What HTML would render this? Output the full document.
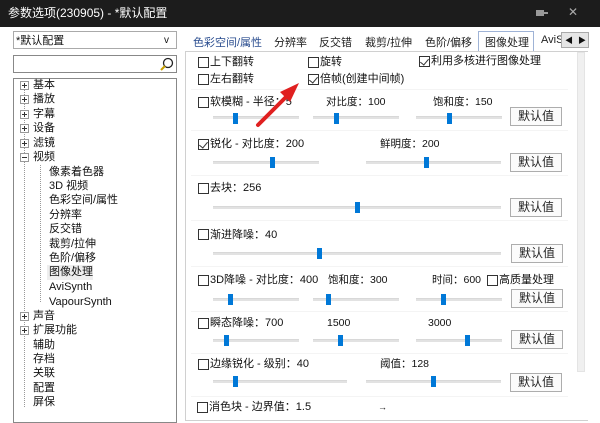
<!DOCTYPE html>
<html><head><meta charset="utf-8"><style>
*{margin:0;padding:0;box-sizing:border-box}
body{width:600px;height:416px;overflow:hidden;background:#fff;position:relative;font-family:"Liberation Sans","Noto Sans CJK SC",sans-serif;font-size:11px;color:#000}
.a{position:absolute;white-space:nowrap;line-height:13px;font-size:10.5px;color:#111}
.cb{position:absolute;width:11px;height:11px;border:1px solid #333;background:#fff}
.ck::after{content:"";position:absolute;left:2px;top:0px;width:4px;height:7px;border:solid #333;border-width:0 1px 1px 0;transform:rotate(40deg)}
.tr{position:absolute;height:3px;background:#e2e2e2;border-top:1px solid #d8d8d8}
.th{position:absolute;width:5px;height:11px;background:#0078d7}
.btn{position:absolute;width:52px;height:19px;border:1px solid #adadad;background:#fbfbfb;font-size:12px;text-align:center;line-height:17px;color:#222}
.sep{position:absolute;left:191px;width:377px;height:1px;background:#bdbdbd;border-bottom:1px solid #f4f4f4}
.pl{position:absolute;left:20px;width:9px;height:9px;border:1px solid #999;background:#fff}
.pl::before{content:"";position:absolute;left:1px;top:3px;width:5px;height:1px;background:#333}
.pl.p::after{content:"";position:absolute;left:3px;top:1px;width:1px;height:5px;background:#333}
.t{position:absolute;font-size:11px;line-height:14px;white-space:nowrap;color:#111}
.tab{position:absolute;top:34px;font-size:11px;color:#222}
</style></head><body>
<div style="position:absolute;left:0;top:0;width:600px;height:27px;background:#1c1c1c"></div>
<div class="a" style="left:8px;top:6px;color:#fff;font-size:12px;line-height:15px">参数选项(230905) - *默认配置</div>
<div class="a" style="left:568px;top:6px;color:#aaa;font-size:12px">✕</div>
<div style="position:absolute;left:536px;top:10px;width:8px;height:6px;background:#999"></div>
<div style="position:absolute;left:544px;top:12px;width:4px;height:2px;background:#999"></div>

<div style="position:absolute;left:13px;top:31px;width:164px;height:18px;border:1px solid #aaa;background:#fff"></div>
<div class="t" style="left:16px;top:34px">*默认配置</div>
<div class="a" style="left:164px;top:34px;font-size:10px">v</div>
<div style="position:absolute;left:13px;top:55px;width:164px;height:18px;border:1px solid #888"></div>
<svg style="position:absolute;left:159px;top:56px" width="16" height="16"><circle cx="9" cy="7" r="4.5" fill="none" stroke="#222" stroke-width="1.3"/><line x1="6" y1="10" x2="2" y2="14" stroke="#c8a000" stroke-width="2"/></svg>
<div style="position:absolute;left:13px;top:78px;width:164px;height:345px;border:1px solid #888"></div>
<div style="position:absolute;left:24px;top:90px;height:317px;border-left:1px dotted #999"></div>
<div style="position:absolute;left:40px;top:165px;height:137px;border-left:1px dotted #999"></div>

<div class="pl p" style="top:81px"></div><div class="t" style="left:33px;top:78px">基本</div>
<div class="pl p" style="top:95px"></div><div class="t" style="left:33px;top:92px">播放</div>
<div class="pl p" style="top:110px"></div><div class="t" style="left:33px;top:107px">字幕</div>
<div class="pl p" style="top:124px"></div><div class="t" style="left:33px;top:121px">设备</div>
<div class="pl p" style="top:139px"></div><div class="t" style="left:33px;top:136px">滤镜</div>
<div class="pl" style="top:153px"></div><div class="t" style="left:33px;top:150px">视频</div>
<div class="t" style="left:49px;top:165px">像素着色器</div>
<div class="t" style="left:49px;top:179px">3D 视频</div>
<div class="t" style="left:49px;top:193px">色彩空间/属性</div>
<div class="t" style="left:49px;top:208px">分辨率</div>
<div class="t" style="left:49px;top:222px">反交错</div>
<div class="t" style="left:49px;top:237px">裁剪/拉伸</div>
<div class="t" style="left:49px;top:251px">色阶/偏移</div>
<div style="position:absolute;left:47px;top:265px;width:46px;height:15px;background:#eee"></div>
<div class="t" style="left:49px;top:265px">图像处理</div>
<div class="t" style="left:49px;top:280px">AviSynth</div>
<div class="t" style="left:49px;top:295px">VapourSynth</div>
<div class="pl p" style="top:312px"></div><div class="t" style="left:33px;top:309px">声音</div>
<div class="pl p" style="top:326px"></div><div class="t" style="left:33px;top:323px">扩展功能</div>
<div class="t" style="left:33px;top:338px">辅助</div>
<div class="t" style="left:33px;top:352px">存档</div>
<div class="t" style="left:33px;top:366px">关联</div>
<div class="t" style="left:33px;top:381px">配置</div>
<div class="t" style="left:33px;top:395px">屏保</div>

<div class="tab" style="left:193px;color:#2a4d8f">色彩空间/属性</div>
<div class="tab" style="left:274px">分辨率</div>
<div class="tab" style="left:319px">反交错</div>
<div class="tab" style="left:365px">裁剪/拉伸</div>
<div class="tab" style="left:425px">色阶/偏移</div>
<div style="position:absolute;left:478px;top:31px;width:56px;height:21px;border:1px solid #9fb3d6;border-bottom:none;background:#fff"></div>
<div class="tab" style="left:485px">图像处理</div>
<div class="tab" style="left:541px">AviS</div>
<div style="position:absolute;left:561px;top:32px;width:28px;height:16px;border:1px solid #aaa;background:#e6e6e6"></div>
<div class="a" style="left:565px;top:34px;font-size:8px">◀</div><div class="a" style="left:578px;top:34px;font-size:8px">▶</div>
<div style="position:absolute;left:185px;top:51px;width:403px;height:370px;border:1px solid #d0d0d0;border-right:none"></div>
<div style="position:absolute;left:577px;top:52px;width:8px;height:320px;background:#f0f0f0;border:1px solid #e4e4e4"></div>

<div class="cb" style="left:198px;top:57px"></div><div class="t" style="left:210px;top:55px">上下翻转</div>
<div class="cb" style="left:198px;top:74px"></div><div class="t" style="left:210px;top:72px">左右翻转</div>
<div class="cb" style="left:308px;top:57px"></div><div class="t" style="left:320px;top:55px">旋转</div>
<div class="cb ck" style="left:308px;top:74px"></div><div class="t" style="left:320px;top:72px">倍帧(创建中间帧)</div>
<div class="cb ck" style="left:419px;top:56px"></div><div class="t" style="left:431px;top:54px">利用多核进行图像处理</div>
<div class="sep" style="top:89px"></div>

<div class="cb" style="left:198px;top:97px"></div><div class="t" style="left:210px;top:95px">软模糊 - 半径：5</div>
<div class="a" style="left:326px;top:96px">对比度：100</div><div class="a" style="left:433px;top:96px">饱和度：150</div>
<div class="tr" style="left:213px;top:116px;width:86px"></div><div class="th" style="left:233px;top:113px"></div>
<div class="tr" style="left:313px;top:116px;width:86px"></div><div class="th" style="left:334px;top:113px"></div>
<div class="tr" style="left:416px;top:116px;width:86px"></div><div class="th" style="left:447px;top:113px"></div>
<div class="btn" style="left:510px;top:107px">默认值</div>
<div class="sep" style="top:130px"></div>

<div class="cb ck" style="left:198px;top:139px"></div><div class="t" style="left:210px;top:137px">锐化 - 对比度：200</div>
<div class="a" style="left:380px;top:138px">鲜明度：200</div>
<div class="tr" style="left:213px;top:161px;width:106px"></div><div class="th" style="left:270px;top:157px"></div>
<div class="tr" style="left:366px;top:161px;width:135px"></div><div class="th" style="left:424px;top:157px"></div>
<div class="btn" style="left:510px;top:153px">默认值</div>
<div class="sep" style="top:175px"></div>

<div class="cb" style="left:198px;top:183px"></div><div class="t" style="left:210px;top:181px">去块：256</div>
<div class="tr" style="left:213px;top:206px;width:288px"></div><div class="th" style="left:355px;top:202px"></div>
<div class="btn" style="left:510px;top:198px">默认值</div>
<div class="sep" style="top:220px"></div>

<div class="cb" style="left:198px;top:229px"></div><div class="t" style="left:210px;top:228px">渐进降噪：40</div>
<div class="tr" style="left:213px;top:252px;width:288px"></div><div class="th" style="left:317px;top:248px"></div>
<div class="btn" style="left:511px;top:244px">默认值</div>
<div class="sep" style="top:266px"></div>

<div class="cb" style="left:198px;top:275px"></div><div class="t" style="left:210px;top:273px">3D降噪 - 对比度：400</div>
<div class="a" style="left:328px;top:274px">饱和度：300</div><div class="a" style="left:432px;top:274px">时间：600</div>
<div class="cb" style="left:487px;top:275px"></div><div class="t" style="left:499px;top:273px">高质量处理</div>
<div class="tr" style="left:213px;top:298px;width:86px"></div><div class="th" style="left:228px;top:294px"></div>
<div class="tr" style="left:313px;top:298px;width:86px"></div><div class="th" style="left:326px;top:294px"></div>
<div class="tr" style="left:416px;top:298px;width:86px"></div><div class="th" style="left:441px;top:294px"></div>
<div class="btn" style="left:511px;top:289px">默认值</div>
<div class="sep" style="top:311px"></div>

<div class="cb" style="left:198px;top:318px"></div><div class="t" style="left:210px;top:316px">瞬态降噪：700</div>
<div class="a" style="left:327px;top:317px">1500</div><div class="a" style="left:428px;top:317px">3000</div>
<div class="tr" style="left:213px;top:339px;width:86px"></div><div class="th" style="left:224px;top:335px"></div>
<div class="tr" style="left:313px;top:339px;width:86px"></div><div class="th" style="left:338px;top:335px"></div>
<div class="tr" style="left:416px;top:339px;width:86px"></div><div class="th" style="left:465px;top:335px"></div>
<div class="btn" style="left:511px;top:330px">默认值</div>
<div class="sep" style="top:353px"></div>

<div class="cb" style="left:198px;top:359px"></div><div class="t" style="left:210px;top:357px">边缘锐化 - 级别：40</div>
<div class="a" style="left:380px;top:358px">阈值：128</div>
<div class="tr" style="left:213px;top:380px;width:134px"></div><div class="th" style="left:233px;top:376px"></div>
<div class="tr" style="left:366px;top:380px;width:135px"></div><div class="th" style="left:431px;top:376px"></div>
<div class="btn" style="left:510px;top:373px">默认值</div>
<div class="sep" style="top:396px"></div>

<div class="cb" style="left:197px;top:402px"></div><div class="t" style="left:209px;top:400px">消色块 - 边界值：1.5</div>
<div class="a" style="left:378px;top:401px;font-size:9px">→</div>

<svg style="position:absolute;left:250px;top:78px" width="60" height="55"><line x1="8" y1="47" x2="40" y2="15" stroke="#e02020" stroke-width="4" stroke-linecap="round"/><polygon points="49,5 30,14 40,24" fill="#e02020"/></svg>
</body></html>
